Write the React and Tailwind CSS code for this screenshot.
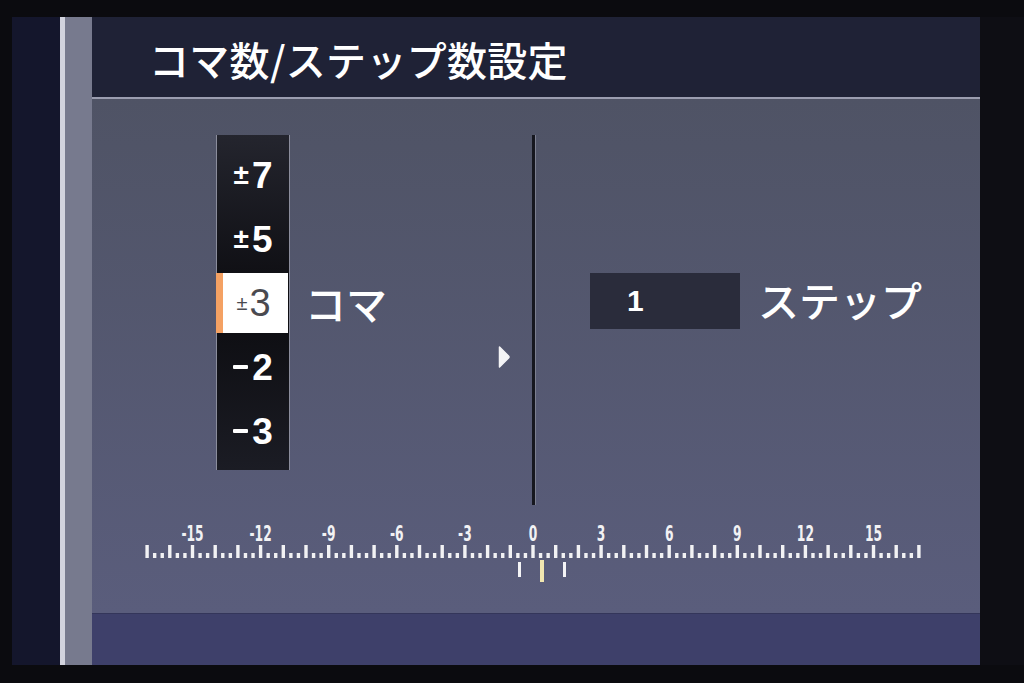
import React from "react";

const jp = { fontFamily: '"Noto Sans CJK JP", "Noto Sans", sans-serif' };
const num = { fontFamily: '"Liberation Sans", Arial, sans-serif' };

function Item({ sign, digit, minus }) {
  return (
    <div className="h-[64px] flex items-center justify-center text-white font-bold" style={num}>
      {minus ? (
        <span className="w-[15px] h-[4px] bg-white mr-[4px] rounded-[1px]" />
      ) : (
        <span className="text-[28px] leading-none mr-[3px]">{sign}</span>
      )}
      <span className="text-[37px] leading-none">{digit}</span>
    </div>
  );
}

function Ruler() {
  const x0 = 441;
  const u = 22.7;
  const ticks = [];
  for (let i = -17; i <= 17; i++) {
    const x = x0 + i * u;
    ticks.push(<rect key={"t" + i} x={x - 1.7} y={25} width={3.4} height={13} fill="#f2f2f4" />);
    if (i < 17) {
      ticks.push(<rect key={"a" + i} x={x + u / 3 - 1.7} y={33} width={3.4} height={5} fill="#f2f2f4" />);
      ticks.push(<rect key={"b" + i} x={x + (2 * u) / 3 - 1.7} y={33} width={3.4} height={5} fill="#f2f2f4" />);
    }
  }
  const labels = [-15, -12, -9, -6, -3, 0, 3, 6, 9, 12, 15];
  return (
    <svg width="888" height="65" className="block">
      {labels.map((l) => (
        <text
          key={l}
          x={x0 + l * u}
          y={21}
          textAnchor="middle"
          fill="#f2f2f4"
          fontSize="21"
          fontWeight="bold"
          fontFamily='"DejaVu Sans Condensed", "DejaVu Sans", sans-serif'
          transform={`translate(${(x0 + l * u) * 0.35} 0) scale(0.65 1)`}
        >
          {l}
        </text>
      ))}
      {ticks}
      <rect x={426} y={42} width={3} height={15} fill="#f4f4f6" />
      <rect x={448} y={40} width={4} height={22} fill="#f1e6b0" />
      <rect x={471} y={42} width={3} height={15} fill="#f4f4f6" />
    </svg>
  );
}

export default function App() {
  return (
    <div className="w-[1024px] h-[683px] bg-[#0b0b0f] pt-[17px] flex overflow-hidden">
      <div className="w-[12px] shrink-0" />
      <div className="w-[48px] h-[648px] shrink-0 bg-[#14162c]" />
      <div className="w-[5px] h-[648px] shrink-0 bg-[#d2d3de]" />
      <div className="w-[27px] h-[648px] shrink-0 bg-[#777a8e]" />
      <div className="w-[888px] h-[648px] shrink-0 flex flex-col">
        <div className="h-[80px] bg-[#1f2236] flex items-center pl-[57px] pt-[4px]">
          <span className="text-white text-[40px] font-medium leading-none tracking-[0.3px]" style={jp}>
            コマ数/ステップ数設定
          </span>
        </div>
        <div className="h-[2px] bg-[#9b9db0]" />
        <div className="h-[514px] bg-gradient-to-b from-[#4f5365] to-[#5a5d7c] pt-[36px] flex flex-col">
          <div className="h-[370px] flex">
            <div className="w-[440px] flex items-center pl-[124px] self-start h-[335px]">
              <div className="w-[74px] h-[335px] border-x border-[#8b8d9c] bg-gradient-to-b from-[#24252e] via-[#0c0c10] to-[#1b1c24] pt-[8px]">
                <Item sign="±" digit="7" />
                <Item sign="±" digit="5" />
                <div className="h-[64px] flex items-center">
                  <div className="h-[60px] w-full bg-white flex items-center relative -ml-px">
                    <div className="w-[7px] h-full bg-[#f4a163]" />
                    <div className="flex-1 flex items-center justify-center pr-[4px] text-[#4a4a50]" style={num}>
                      <span className="text-[20px] leading-none mr-[2px] font-light">±</span>
                      <span className="text-[38px] leading-none font-light">3</span>
                    </div>
                  </div>
                </div>
                <Item minus digit="2" />
                <Item minus digit="3" />
              </div>
              <span className="ml-[15px] text-white text-[41px] font-medium leading-none" style={jp}>
                コマ
              </span>
              <div className="flex-1" />
              <svg width="12" height="24" className="mt-[108px] mr-[22px]">
                <path d="M1.5 2 L10.5 11 Q11.5 12 10.5 13 L1.5 22 Z" fill="#f4f4f6" stroke="#f4f4f6" strokeWidth="1.5" strokeLinejoin="round" />
              </svg>
            </div>
            <div className="w-[3px] h-[370px] bg-[#16171f]" />
            <div className="w-px h-[370px] bg-[#7c7f90]" />
            <div className="flex-1 flex items-start pt-[138px]">
              <div className="ml-[54px] w-[150px] h-[56px] bg-[#2a2c3b] flex items-center pl-[37px]">
                <span className="text-white text-[30px] font-bold leading-none" style={num}>1</span>
              </div>
              <span className="ml-[18px] mt-[6px] text-white text-[41px] font-medium leading-none" style={jp}>
                ステップ
              </span>
            </div>
          </div>
          <div className="mt-[15px]">
            <Ruler />
          </div>
        </div>
        <div className="h-[52px] bg-[#3e406a] border-t border-[#34365a]" />
      </div>
      <div className="flex-1 h-[648px] bg-[#0e0e14]" />
    </div>
  );
}
